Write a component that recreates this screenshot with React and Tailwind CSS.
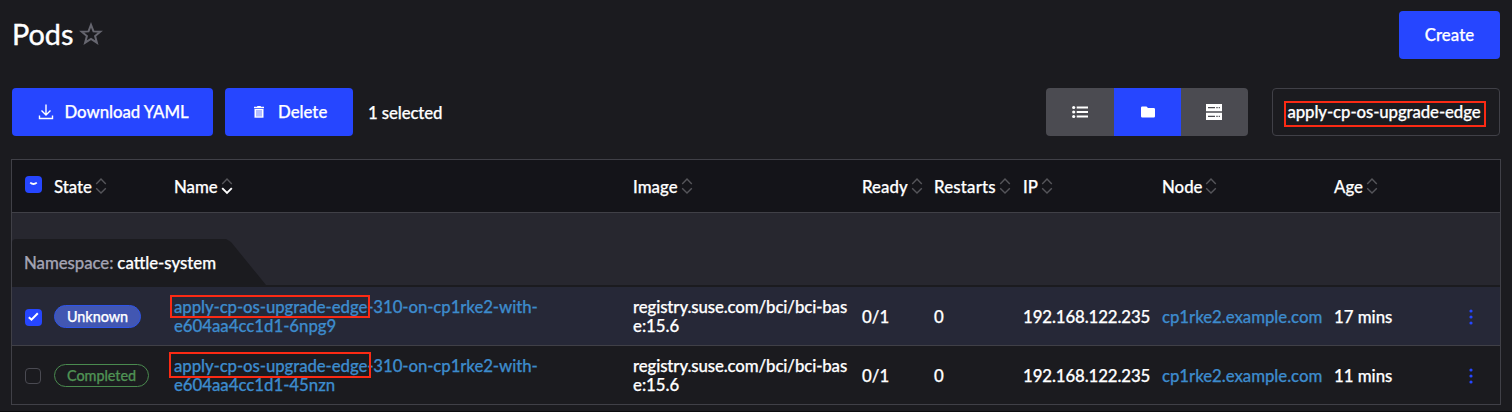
import React from "react";

const COLS =
  "grid grid-cols-[42px_120px_459px_229px_72px_89px_139px_172px_1fr_52px] items-center";

function Sort({ desc }) {
  return (
    <svg width="12" height="18" viewBox="0 0 12 18" fill="none" className="ml-[3px] shrink-0">
      <path d="M1.200 7 6 2l4.800 5" stroke="#55555a" strokeWidth="1.400" />
      <path d="M1.200 11.200 6 16l4.800-4.800" stroke={desc ? "#ffffff" : "#55555a"} strokeWidth={desc ? "1.900" : "1.400"} />
    </svg>
  );
}

function Head({ label, desc, tracking = "" }) {
  return (
    <div className="flex items-center">
      <span className={`pt-[2px] ${tracking}`}>{label}</span>
      <Sort desc={desc} />
    </div>
  );
}

function Checkbox({ checked }) {
  if (!checked) return <div className="h-4 w-4 rounded-[4px] border border-[#4a4a52]" />;
  return (
    <div className="flex h-[17px] w-[17px] items-center justify-center rounded-[4px] bg-[#2646ff]">
      <svg width="17" height="17" viewBox="0 0 17 17" fill="none">
        <path d="M3.800 8.200 6.500 10.700 12.800 4.300" stroke="#fff" strokeWidth="2" />
      </svg>
    </div>
  );
}

function Row({ selected, state, badge, suffix, age, mark }) {
  return (
    <div className={`${COLS} h-[58px] ${selected ? "bg-[#262837]" : "bg-[#1b1b1f]"}`}>
      <div className="pl-[13px] pt-[2px]">
        <Checkbox checked={selected} />
      </div>
      <div className="flex">
        <span className={`flex h-[23px] items-center rounded-full border px-3 pt-[2px] text-[14.400px] tracking-[-0.050px] ${badge}`}>
          {state}
        </span>
      </div>
      <div className="relative leading-[19px] tracking-[-0.090px] text-[#3d8bcc]">
        apply-cp-os-upgrade-edge-310-on-cp1rke2-with-
        <br />
        <span className="tracking-[-0.020px]">{suffix}</span>
        <div className={`absolute border-2 border-[#fb2a14] ${mark}`} />
      </div>
      <div className="leading-[19px] tracking-[-0.100px]">
        registry.suse.com/bci/bci-bas
        <br />
        <span className="tracking-normal">e:15.6</span>
      </div>
      <div className="pt-[2px]">0/1</div>
      <div className="pt-[2px]">0</div>
      <div className="pt-[2px] tracking-[-0.100px]">192.168.122.235</div>
      <div className="pt-[2px] tracking-[-0.050px] text-[#3d8bcc]">cp1rke2.example.com</div>
      <div className="pt-[2px]">{age}</div>
      <svg width="6" height="18" viewBox="0 0 6 18" fill="#2646ff" className="ml-5 mt-px">
        <circle cx="3" cy="3" r="1.600" />
        <circle cx="3" cy="9" r="1.600" />
        <circle cx="3" cy="15" r="1.600" />
      </svg>
    </div>
  );
}

export default function App() {
  return (
    <div className="h-[412px] w-[1512px] overflow-hidden border-b border-[#0b0b0d] bg-[#1b1b1f] font-['Lato',sans-serif] text-[16.800px] font-medium text-white [-webkit-text-stroke:0.250px]">
      <header className="flex h-[59px] items-end justify-between pl-3 pr-3">
        <div className="flex h-12 items-center">
          <h1 className="text-[28.800px] font-normal [-webkit-text-stroke:0.400px]">Pods</h1>
          <svg width="24" height="24" viewBox="0 0 24 24" fill="none" className="mb-[3px] ml-[6px]">
            <path
              d="M12 2.800 14.500 9.400 21.300 9.700 16.100 14 17.900 20.700 12 17 6.100 20.700 7.900 14 2.700 9.700 9.500 9.400Z"
              stroke="#66666f"
              strokeWidth="2"
            />
          </svg>
        </div>
        <button className="h-12 w-[101px] rounded-[4px] bg-[#2646ff] tracking-[0.100px]">Create</button>
      </header>

      <div className="mt-[29px] flex h-12 items-center px-3">
        <button className="flex h-12 w-[201px] items-center rounded-[4px] bg-[#2646ff] pl-[26px]">
          <svg width="16" height="18" viewBox="0 0 16 18" fill="none" stroke="#fff" strokeWidth="1.400">
            <path d="M8 1.500v10M3.500 7.500 8 12l4.500-4.500M1.500 12.500v3h13v-3" />
          </svg>
          <span className="ml-[10.500px] tracking-[-0.050px]">Download YAML</span>
        </button>
        <button className="ml-3 flex h-12 w-32 items-center rounded-[4px] bg-[#2646ff] pl-[28px]">
          <svg width="12" height="14" viewBox="0 0 12 14" fill="#fff">
            <path d="M1 1.800h3.200V1h3.600v.8H11v1.400H1Z" />
            <path d="M1.500 4h9v8.700h-9Z" />
            <path d="M4 5v6.500M6 5v6.500M8 5v6.500" stroke="#2646ff" strokeWidth=".7" />
          </svg>
          <span className="ml-[13px]">Delete</span>
        </button>
        <span className="ml-[15px] mt-[2px] tracking-[-0.100px]">1 selected</span>

        <div className="ml-auto flex h-12 w-[202px] overflow-hidden rounded-[4px]">
          <div className="flex w-[68px] items-center justify-center bg-[#4b4b51]">
            <svg width="16" height="14" viewBox="0 0 16 14" fill="#fff" className="mb-px">
              <circle cx="1.700" cy="2.500" r="1.600" />
              <circle cx="1.700" cy="7" r="1.600" />
              <circle cx="1.700" cy="11.500" r="1.600" />
              <path d="M4.700 1.500H16v2H4.700ZM4.700 6H16v2H4.700ZM4.700 10.500H16v2H4.700Z" />
            </svg>
          </div>
          <div className="flex w-[67px] items-center justify-center bg-[#2646ff]">
            <svg width="14" height="12" viewBox="0 0 14 12" fill="#fff" className="mb-px">
              <path d="M1.200.5H5.500L7 2h5.800A1.200 1.200 0 0 1 14 3.200v7.100a1.200 1.200 0 0 1-1.200 1.200H1.200A1.200 1.200 0 0 1 0 10.300V1.700A1.200 1.200 0 0 1 1.200.5Z" />
            </svg>
          </div>
          <div className="flex w-[67px] items-center justify-center bg-[#4b4b51]">
            <svg width="16" height="16" viewBox="0 0 16 16" className="mr-px">
              <path d="M0 0h16v7.300H0ZM0 8.700h16V16H0Z" fill="#fff" />
              <path d="M2 3.700h7M10.300 3.700h1.400M12.700 3.700h1.200M2 12.300h7M10.300 12.300h1.400M12.700 12.300h1.200" stroke="#4b4b51" strokeWidth="1.200" />
            </svg>
          </div>
        </div>
        <div className="relative ml-6 flex h-12 w-[228px] items-center rounded-[4px] border border-[#404047] pl-[14.500px]">
          <span className="tracking-[-0.100px]">apply-cp-os-upgrade-edge</span>
          <div className="absolute left-[11px] top-3 h-[26px] w-[202px] border-2 border-[#fb2a14]" />
        </div>
      </div>

      <div className="ml-[11px] mt-[23px] w-[1490px] overflow-hidden border border-[#404047]">
        <div className={`${COLS} h-[53px] border-b border-[#404047] bg-[#141419]`}>
          <div className="pb-1 pl-[13px]">
            <div className="flex h-[17px] w-[17px] items-center justify-center rounded-[4px] bg-[#2646ff]">
              <svg width="17" height="17" viewBox="0 0 17 17" fill="none">
                <path d="M5.200 6.600q3.300 2.800 6.600 0" stroke="#fff" strokeWidth="1.800" />
              </svg>
            </div>
          </div>
          <Head label="State" />
          <Head label="Name" desc />
          <Head label="Image" tracking="tracking-[0.050px]" />
          <Head label="Ready" tracking="tracking-[0.050px]" />
          <Head label="Restarts" tracking="tracking-[0.200px]" />
          <Head label="IP" />
          <Head label="Node" />
          <Head label="Age" />
        </div>

        <div className="flex h-[74px] items-end border-b-2 border-[#1b1b1f] bg-[#27272f]">
          <div className="flex h-[46px] w-[254px] items-center rounded-tl-[4px] bg-[#1b1b1f] pl-3 pt-px [clip-path:polygon(0_0,214px_0,219px_3px,254px_100%,0_100%)]">
            <span className="tracking-[-0.050px] text-[#a3a3b3]">Namespace:</span>
            <span className="ml-1">cattle-system</span>
          </div>
        </div>

        <Row
          selected
          state="Unknown"
          badge="border-[#2f55e8] bg-[#4257b2] text-white"
          suffix="e604aa4cc1d1-6npg9"
          age="17 mins"
          mark="-left-1 top-[-2px] h-[23px] w-[200px]"
        />
        <div className="h-px bg-[#404047]" />
        <Row
          state="Completed"
          badge="border-[#4a8a4f] text-[#4f9154]"
          suffix="e604aa4cc1d1-45nzn"
          age="11 mins"
          mark="left-[-5px] top-[-4px] h-[26px] w-[202px]"
        />
      </div>
    </div>
  );
}
